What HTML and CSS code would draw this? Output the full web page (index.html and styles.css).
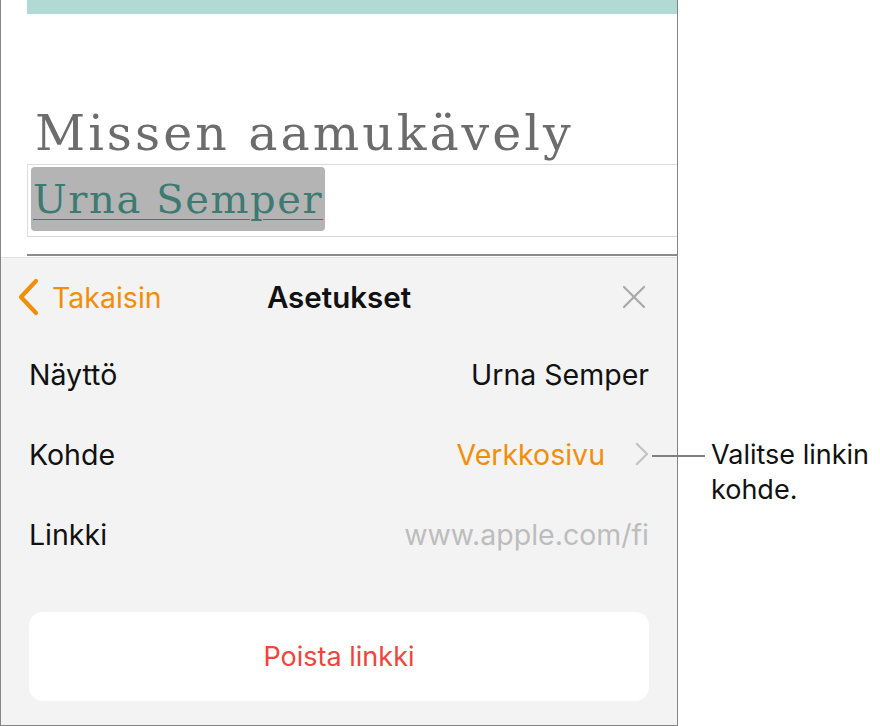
FILE: index.html
```html
<!DOCTYPE html>
<html lang="fi">
<head>
  <meta charset="UTF-8" />
  <title>Asetukset</title>
  <link rel="stylesheet" href="styles.css">
</head>
<body>
<div class="page">
  <div class="frame">
    <div class="doc">
      <div class="doc-bar"></div>
      <div class="doc-title">Missen aamukävely</div>
      <div class="doc-box">
        <span class="doc-sel"><span class="doc-link">Urna Semper</span></span>
      </div>
    </div>
    <div class="panel">
      <div class="nav">
        <a class="back">
          <svg width="24" height="38" viewBox="0 0 24 38"><path d="M20 3 L5 19 L20 35" fill="none" stroke="#f08f0b" stroke-width="4.2" stroke-linecap="round" stroke-linejoin="round"/></svg>
          <span>Takaisin</span>
        </a>
        <div class="nav-title">Asetukset</div>
        <svg class="close" width="24" height="24" viewBox="0 0 24 24"><path d="M2 2 L22 22 M22 2 L2 22" stroke="#a9a9a9" stroke-width="2.2" stroke-linecap="round"/></svg>
      </div>
      <div class="row">
        <span class="label">Näyttö</span>
        <span class="value">Urna Semper</span>
      </div>
      <div class="row">
        <span class="label">Kohde</span>
        <span class="value accent">Verkkosivu
          <svg class="chev" width="14" height="24" viewBox="0 0 14 24"><path d="M2 2 L12 12 L2 22" fill="none" stroke="#c3c3c3" stroke-width="2.4" stroke-linecap="round" stroke-linejoin="round"/></svg>
        </span>
      </div>
      <div class="row">
        <span class="label">Linkki</span>
        <span class="value muted">www.apple.com/fi</span>
      </div>
      <div class="remove">Poista linkki</div>
    </div>
  </div>
  <div class="callout">
    <div class="callout-line"></div>
    <div class="callout-text">Valitse linkin<br>kohde.</div>
  </div>
</div>
</body>
</html>
```

FILE: styles.css
```css
* { box-sizing: border-box; }
body {
  margin: 0;
  background: #fff;
  font-family: Inter, "Noto Sans", sans-serif;
  color: #111;
}
.page {
  position: relative;
  width: 880px;
  height: 726px;
}
.frame {
  width: 678px;
  height: 726px;
  border: 1px solid #858585;
  border-top: none;
  display: flex;
  flex-direction: column;
  overflow: hidden;
}
.doc {
  padding-left: 26px;
  height: 257px;
  background: #fff;
}
.doc-bar {
  height: 14px;
  background: #b1dad5;
}
.doc-title {
  margin-top: 91px;
  padding-left: 8px;
  font-family: "DejaVu Serif", serif;
  font-size: 49px;
  letter-spacing: 3px;
  line-height: 57px;
  color: #6c6c6c;
  white-space: nowrap;
}
.doc-box {
  margin-top: 2px;
  height: 73px;
  border: 1px solid #dcdcdc;
  border-right: none;
  padding: 2px 0 0 3px;
  border-bottom-color: #d6d6d6;
  position: relative;
}
.doc-box::after {
  content: "";
  position: absolute;
  left: -1px;
  right: 0;
  bottom: -20px;
  height: 2px;
  background: #8c8c8c;
}
.doc-sel {
  display: inline-block;
  height: 64px;
  padding: 0 2px;
  background: #b4b4b4;
  border-radius: 4px;
}
.doc-link {
  font-family: "DejaVu Serif", serif;
  font-size: 40px;
  letter-spacing: 1.6px;
  line-height: 64px;
  color: #3c7a72;
  text-decoration: underline;
  text-decoration-thickness: 1px;
  text-underline-offset: 6px;
  white-space: nowrap;
}
.panel {
  flex: 1;
  background: #f3f3f3;
  border-top: 1px solid #e2e2e2;
  padding: 0 28px;
}
.nav {
  height: 78px;
  display: flex;
  align-items: center;
  justify-content: space-between;
  position: relative;
  margin: 0 -28px;
  padding: 0 31px 0 15px;
}
.back {
  display: flex;
  align-items: center;
  gap: 12px;
  color: #f08f0b;
  font-size: 28.5px;
}
.nav-title {
  position: absolute;
  left: 0;
  right: 0;
  text-align: center;
  font-size: 29.5px;
  font-weight: 600;
  color: #111;
  pointer-events: none;
}
.row {
  height: 80px;
  display: flex;
  align-items: center;
  justify-content: space-between;
  font-size: 28.5px;
  padding-bottom: 4px;
}
.value {
  display: flex;
  align-items: center;
}
.accent { color: #f08f0b; }
.muted { color: #bdbdbd; }
.chev { margin-left: 30px; }
.remove {
  margin-top: 36px;
  height: 89px;
  background: #fff;
  border-radius: 14px;
  display: flex;
  align-items: center;
  justify-content: center;
  color: #f2433d;
  font-size: 27px;
}
.callout {
  position: absolute;
  left: 652px;
  top: 437px;
  display: flex;
  align-items: flex-start;
}
.callout-line {
  width: 53px;
  height: 2px;
  margin-top: 18px;
  background: #7f7f7f;
}
.callout-text {
  margin-left: 6px;
  font-size: 27px;
  line-height: 35px;
  color: #111;
  white-space: nowrap;
}
```
